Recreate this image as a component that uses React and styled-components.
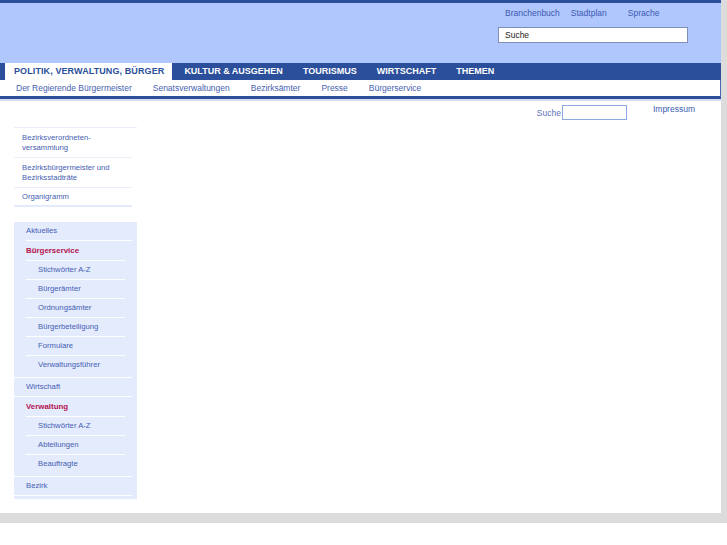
import React from "react";
import styled, { createGlobalStyle } from "styled-components";

const GlobalStyle = createGlobalStyle`
  body {
    margin: 0;
    background: #fff;
    font-family: "Liberation Sans", Arial, sans-serif;
  }
  ul {
    list-style: none;
    margin: 0;
    padding: 0;
  }
`;

const Page = styled.div`
  width: 727px;
  box-sizing: border-box;
  border-right: 6px solid #dcdcdc;
  border-bottom: 10px solid #dcdcdc;
  padding-bottom: 14px;
  background: #fff;
`;

const Header = styled.div`
  border-top: 3px solid #2b4f9b;
  background: #b0c7fd;
  display: flex;
  justify-content: flex-end;
  padding: 5px 33px 0 0;
  height: 55px;
`;

const HeaderTools = styled.div`
  width: 190px;
  display: flex;
  flex-direction: column;
`;

const ToolLinks = styled.div`
  display: flex;
  padding-left: 7px;
  height: 11px;
  line-height: 11px;
  margin-bottom: 8px;
`;

const ToolLink = styled.a`
  font-size: 8.5px;
  color: #3d5ab0;
  margin-right: ${(p) => p.$gap}px;
  text-decoration: none;
`;

const SearchField = styled.div`
  height: 16px;
  box-sizing: border-box;
  background: #fff;
  border: 1px solid #7f8fb9;
  font-size: 8.5px;
  color: #222;
  line-height: 14px;
  padding-left: 6px;
`;

const Tabs = styled.div`
  height: 17px;
  background: #2b4f9b;
  display: flex;
  padding-left: 5px;
`;

const Tab = styled.a`
  font-size: 9px;
  font-weight: 700;
  letter-spacing: ${(p) => (p.$active ? "0.1px" : "0")};
  line-height: 17px;
  padding: ${(p) => (p.$active ? "0 8px 0 9px" : `0 10px 0 ${p.$first ? 12 : 10}px`)};
  color: ${(p) => (p.$active ? "#2b4f9b" : "#fff")};
  background: ${(p) => (p.$active ? "#fff" : "transparent")};
  text-decoration: none;
  white-space: nowrap;
`;

const SubNav = styled.div`
  height: 16px;
  background: #fff;
  border-right: 1px solid #4a67ad;
  border-bottom: 3px solid #2b4f9b;
  display: flex;
  gap: 21px;
  padding-left: 16px;
  align-items: center;
`;

const SubNavLink = styled.a`
  font-size: 8.5px;
  color: #4862b0;
  text-decoration: none;
`;

const SubNavShade = styled.div`
  height: 2px;
  background: #d6def1;
`;

const UtilRow = styled.div`
  display: flex;
  justify-content: flex-end;
  align-items: flex-start;
  padding: 4px 26px 0 0;
  height: 16px;
`;

const SmallSearch = styled.label`
  display: flex;
  align-items: center;
  font-size: 8.5px;
  color: #5a72b8;
`;

const SmallInput = styled.span`
  display: block;
  width: 65px;
  height: 15px;
  box-sizing: border-box;
  border: 1px solid #8ea8e2;
  margin-left: 1px;
  background: #fff;
`;

const Impressum = styled.a`
  font-size: 8.5px;
  color: #3d5cb0;
  margin-left: 26px;
  margin-top: -1px;
  text-decoration: none;
`;

const Sidebar = styled.div`
  width: 123px;
  margin: 6px 0 0 14px;
  display: flex;
  flex-direction: column;
  gap: 15px;
`;

const PlainBox = styled.ul`
  border-top: 1px solid #e9eef9;
`;

const PlainItem = styled.li`
  font-size: 7.7px;
  line-height: 10px;
  color: #4560b2;
  padding: ${(p) => (p.$last ? "4px 8px 3px" : "5px 8px 4px")};
  margin-right: 5px;
  border-bottom: ${(p) => (p.$last ? "2px solid #e3ebfd" : "1px solid #e9eef9")};
`;

const NavBox = styled.div`
  background: #e3ebfd;
  padding: 0 5px 3px 0;
`;

const TopItem = styled.div`
  font-size: 7.7px;
  height: 18px;
  line-height: 18px;
  padding-left: 12px;
  color: #4560b2;
  border-top: ${(p) => (p.$line ? "1px solid #fff" : "none")};
  border-bottom: ${(p) => (p.$bottom ? "1px solid #fff" : "none")};
`;

const Group = styled.div`
  border-top: 1px solid #fff;
  margin-left: ${(p) => (p.$indentLine ? "12px" : "0")};
  padding-bottom: 3px;
`;

const GroupTitle = styled.div`
  font-size: 7.9px;
  font-weight: 700;
  height: 19px;
  line-height: 19px;
  padding-left: ${(p) => (p.$indentLine ? "0" : "12px")};
  color: #b5134d;
`;

const SubList = styled.ul`
  margin: 0 7px 0 ${(p) => (p.$indentLine ? "0" : "12px")};
`;

const SubItem = styled.li`
  font-size: 7.7px;
  height: 18px;
  line-height: 18px;
  padding-left: 12px;
  color: #4560b2;
  border-top: 1px solid #fff;
`;

const NavGroup = ({ title, items, indentLine }) => (
  <Group $indentLine={indentLine}>
    <GroupTitle $indentLine={indentLine}>{title}</GroupTitle>
    <SubList $indentLine={indentLine}>
      {items.map((it) => (
        <SubItem key={it}>{it}</SubItem>
      ))}
    </SubList>
  </Group>
);

const App = () => {
  return (
    <>
      <GlobalStyle />
      <Page>
        <Header>
          <HeaderTools>
            <ToolLinks>
              <ToolLink $gap={11}>Branchenbuch</ToolLink>
              <ToolLink $gap={21}>Stadtplan</ToolLink>
              <ToolLink $gap={0}>Sprache</ToolLink>
            </ToolLinks>
            <SearchField>Suche</SearchField>
          </HeaderTools>
        </Header>
        <Tabs>
          <Tab $active>POLITIK, VERWALTUNG, BÜRGER</Tab>
          <Tab $first>KULTUR &amp; AUSGEHEN</Tab>
          <Tab>TOURISMUS</Tab>
          <Tab>WIRTSCHAFT</Tab>
          <Tab>THEMEN</Tab>
        </Tabs>
        <SubNav>
          <SubNavLink>Der Regierende Bürgermeister</SubNavLink>
          <SubNavLink>Senatsverwaltungen</SubNavLink>
          <SubNavLink>Bezirksämter</SubNavLink>
          <SubNavLink>Presse</SubNavLink>
          <SubNavLink>Bürgerservice</SubNavLink>
        </SubNav>
        <SubNavShade />
        <UtilRow>
          <SmallSearch>
            Suche
            <SmallInput />
          </SmallSearch>
          <Impressum>Impressum</Impressum>
        </UtilRow>
        <Sidebar>
          <PlainBox>
            <PlainItem>
              Bezirksverordneten-
              <br />
              versammlung
            </PlainItem>
            <PlainItem>
              Bezirksbürgermeister und
              <br />
              Bezirksstadträte
            </PlainItem>
            <PlainItem $last>Organigramm</PlainItem>
          </PlainBox>
          <NavBox>
            <TopItem>Aktuelles</TopItem>
            <NavGroup
              indentLine
              title="Bürgerservice"
              items={[
                "Stichwörter A-Z",
                "Bürgerämter",
                "Ordnungsämter",
                "Bürgerbeteiligung",
                "Formulare",
                "Verwaltungsführer",
              ]}
            />
            <TopItem $line>Wirtschaft</TopItem>
            <NavGroup
              title="Verwaltung"
              items={["Stichwörter A-Z", "Abteilungen", "Beauftragte"]}
            />
            <TopItem $line $bottom>
              Bezirk
            </TopItem>
          </NavBox>
        </Sidebar>
      </Page>
    </>
  );
};

export default App;
